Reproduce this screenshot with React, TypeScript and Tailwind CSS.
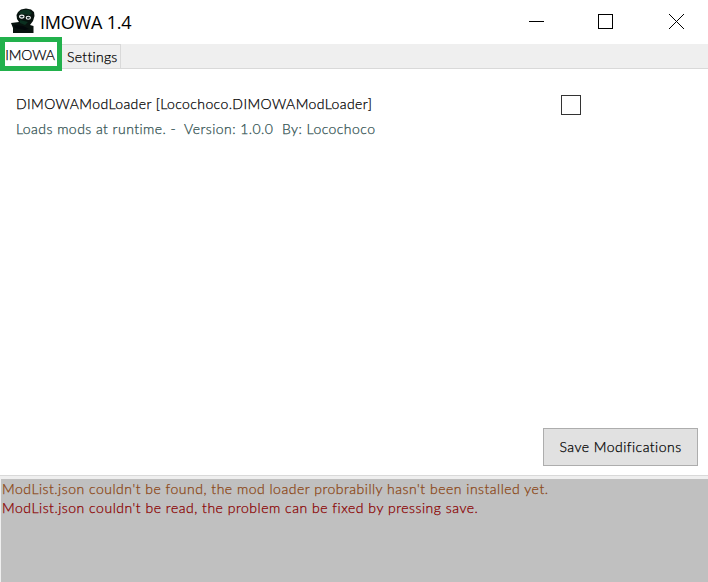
import React from "react";

const caption = "font-['Open_Sans','Noto_Sans',sans-serif]";

function AppIcon() {
  return (
    <svg width="24" height="26" viewBox="0 0 24 26" className="block">
      <path d="M5.5 7 7 4 10 1.5 15 .5 20 1.5 23 4 23.5 8 22 13 19 17 22.5 18 22.5 25H2V20L0 15 8 14 6 11Z" fill="#08130f" />
      <path d="M8 4 12 2 18 2 21 5 19 7 9 6ZM9 12 17 14 14 17 9 15Z" fill="#0b3020" />
      <path d="M3 17 12 18 18 21 14 22 4 20Z" fill="#03080b" />
      <ellipse cx="10.8" cy="8.6" rx="2.2" ry="1.5" fill="#122426" stroke="#f3f6f6" strokeWidth="1.1" />
      <ellipse cx="17.3" cy="9.7" rx="2.1" ry="1.5" fill="#122426" stroke="#f3f6f6" strokeWidth="1.1" />
    </svg>
  );
}

function TitleBar() {
  return (
    <header className="flex h-11 shrink-0 items-start bg-white">
      <div className="pl-[11px] pt-2">
        <AppIcon />
      </div>
      <h1 className={`${caption} ml-[5px] mt-2 whitespace-nowrap text-[18px] font-normal leading-7 tracking-[-0.2px] text-black [-webkit-text-stroke:0px]`}>IMOWA 1.4</h1>
      <div className="ml-auto flex gap-[54px] pr-6 pt-[14px]">
        <svg width="15" height="15" shapeRendering="crispEdges"><path d="M0 7.5H15" stroke="#000" /></svg>
        <svg width="15" height="15" shapeRendering="crispEdges"><path d="M.5.5H14.5V14.5H.5Z" fill="none" stroke="#000" /></svg>
        <svg width="15" height="15" className="ml-[2px]"><path d="M0 0 15 15M15 0 0 15" stroke="#000" /></svg>
      </div>
    </header>
  );
}

function Tabs() {
  return (
    <nav className="flex h-[25px] shrink-0 border-b border-[#d9d9d9] bg-[#efefef]">
      <div className="relative z-10 -mt-[7px] flex h-[34px] w-[62px] shrink-0 items-center justify-center whitespace-nowrap border-[5px] border-[#22b14c] bg-white pr-[2px] pt-px leading-5 tracking-[-0.15px]">
        <span>IMOWA</span>
      </div>
      <div className="flex w-[59px] items-center whitespace-nowrap border-r border-t border-[#d9d9d9] pl-[5px] leading-5 tracking-[0.3px]">
        <span>Settings</span>
      </div>
    </nav>
  );
}

export default function App() {
  return (
    <div className="flex h-[582px] w-[708px] flex-col overflow-hidden bg-white font-['Lato','Open_Sans',sans-serif] text-[14px] font-light text-black [-webkit-text-stroke:0.25px_currentColor]">
      <TitleBar />
      <Tabs />
      <main className="flex grow flex-col justify-between">
        <div className="flex pl-4 pt-[25px]">
          <div className="w-[545px] whitespace-pre leading-5">
            <p className="tracking-[0.4px]">DIMOWAModLoader [Locochoco.DIMOWAModLoader]</p>
            <p className="mt-[5px] tracking-[0.45px] text-[#2f4f4f]">Loads mods at runtime. -  Version: 1.0.0  By: Locochoco</p>
          </div>
          <div role="checkbox" aria-checked={false} className="mt-px size-5 border border-[#333]" />
        </div>
        <button className="mb-[9px] mr-[10px] flex h-[38px] w-[155px] items-center justify-center self-end whitespace-nowrap border border-[#adadad] bg-[#e1e1e1] pb-[2px] tracking-[0.47px]">
          <span>Save Modifications</span>
        </button>
      </main>
      <div className="h-1 shrink-0 border-t border-[#d9d9d9] bg-[#efefef]" />
      <footer className="h-[103px] shrink-0 whitespace-nowrap border-l border-[#efefef] bg-[#c0c0c0] pl-px leading-[19px]">
        <p className="tracking-[0.5px] text-[#8b4513]">ModList.json couldn't be found, the mod loader probrabilly hasn't been installed yet.</p>
        <p className="tracking-[0.51px] text-[#8b0000]">ModList.json couldn't be read, the problem can be fixed by pressing save.</p>
      </footer>
    </div>
  );
}
